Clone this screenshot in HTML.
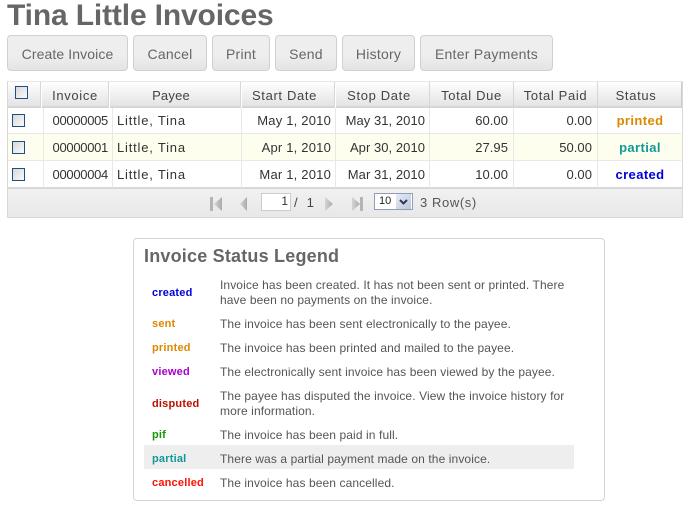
<!DOCTYPE html>
<html>
<head>
<meta charset="utf-8">
<style>
html,body{margin:0;padding:0;background:#fff;}
body{width:691px;height:507px;overflow:hidden;position:relative;font-family:"Liberation Sans",Arial,sans-serif;color:#333;}
.a{position:absolute;white-space:nowrap;}
h1{position:absolute;left:7px;top:-3px;margin:0;font-size:30px;line-height:38px;font-weight:bold;color:#666;white-space:nowrap;letter-spacing:-.15px;}
.btn{position:absolute;top:35px;height:34px;box-sizing:content-box;border:1px solid #d0d0d0;border-radius:4px;background:linear-gradient(#eee 0,#eee 55%,#e4e4e4 100%);color:#666;font-size:14px;line-height:36px;text-align:center;letter-spacing:.25px;}
.hd{position:absolute;top:82px;height:24px;box-sizing:content-box;background:linear-gradient(#fff,#f3f3f3 40%,#e4e4e4);border-bottom:2px solid #d6d6d6;border-right:1px solid #d6d6d6;color:#444;font-size:13px;line-height:28px;text-align:center;letter-spacing:.65px;}
.v{position:absolute;top:108px;width:1px;height:80px;background:#e8e8e8;}
.h{position:absolute;left:8px;width:673px;height:1px;background:#e8e8e8;}
.c{position:absolute;font-size:13px;line-height:16px;color:#333;white-space:nowrap;letter-spacing:.2px;}
.n{letter-spacing:-.3px;}
.m{letter-spacing:.05px;}
.t{letter-spacing:.8px;}
.r{text-align:right;}
.st{position:absolute;left:598px;width:84px;text-align:center;font-size:13px;font-weight:bold;line-height:16px;letter-spacing:.4px;}
.cb{position:absolute;width:11px;height:11px;border:1px solid #1c4f83;background:linear-gradient(135deg,#d8d8d8,#fafafa);}
.lb{position:absolute;left:152px;font-size:11px;font-weight:bold;line-height:14px;white-space:nowrap;letter-spacing:.2px;}
.ds{position:absolute;left:220px;font-size:12px;line-height:15px;color:#555;white-space:nowrap;letter-spacing:.1px;}
</style>
</head>
<body>
<h1>Tina Little Invoices</h1>

<div class="btn" style="left:7px;width:119px;letter-spacing:.1px;">Create Invoice</div>
<div class="btn" style="left:133px;width:72px;">Cancel</div>
<div class="btn" style="left:212px;width:56px;">Print</div>
<div class="btn" style="left:275px;width:60px;">Send</div>
<div class="btn" style="left:342px;width:71px;">History</div>
<div class="btn" style="left:420px;width:131px;">Enter Payments</div>

<!-- grid frame -->
<div class="a" style="left:7px;top:81px;width:674px;height:135px;border:1px solid #d8d8d8;border-top-color:#e8e8e8;"></div>

<!-- header -->
<div class="hd" style="left:8px;width:32px;"></div>
<div class="hd" style="left:42px;width:66px;">Invoice</div>
<div class="hd" style="left:110px;width:122px;padding-right:8px;letter-spacing:.2px;">Payee</div>
<div class="hd" style="left:242px;width:85px;padding-right:7px;">Start Date</div>
<div class="hd" style="left:336px;width:86px;padding-right:7px;">Stop Date</div>
<div class="hd" style="left:430px;width:83px;">Total Due</div>
<div class="hd" style="left:514px;width:83px;">Total Paid</div>
<div class="hd" style="left:598px;width:76px;padding-right:7px;border-right:1px solid #ccc;">Status</div>
<div class="cb" style="left:15px;top:86px;"></div>

<!-- rows -->
<div class="a" style="left:8px;top:134px;width:674px;height:26px;background:#fdfeee;"></div>
<div class="h" style="top:133px;"></div>
<div class="h" style="top:160px;"></div>
<div class="a" style="left:8px;top:187px;width:674px;height:2px;background:#d8d8d8;"></div>
<div class="v" style="left:43px;"></div>
<div class="v" style="left:112px;"></div>
<div class="v" style="left:241px;"></div>
<div class="v" style="left:335px;"></div>
<div class="v" style="left:429px;"></div>
<div class="v" style="left:513px;"></div>
<div class="v" style="left:597px;"></div>

<div class="cb" style="left:12px;top:114px;"></div>
<div class="cb" style="left:12px;top:141px;"></div>
<div class="cb" style="left:12px;top:168px;"></div>

<div class="c r n" style="left:44px;width:64px;top:113px;">00000005</div>
<div class="c t" style="left:117px;top:113px;">Little, Tina</div>
<div class="c r" style="left:242px;width:89px;top:113px;">May 1, 2010</div>
<div class="c r m" style="left:336px;width:89px;top:113px;">May 31, 2010</div>
<div class="c r m" style="left:430px;width:78px;top:113px;">60.00</div>
<div class="c r m" style="left:514px;width:78px;top:113px;">0.00</div>
<div class="st" style="top:113px;color:#dd8800;">printed</div>

<div class="c r n" style="left:44px;width:64px;top:140px;">00000001</div>
<div class="c t" style="left:117px;top:140px;">Little, Tina</div>
<div class="c r" style="left:242px;width:89px;top:140px;">Apr 1, 2010</div>
<div class="c r m" style="left:336px;width:89px;top:140px;">Apr 30, 2010</div>
<div class="c r m" style="left:430px;width:78px;top:140px;">27.95</div>
<div class="c r m" style="left:514px;width:78px;top:140px;">50.00</div>
<div class="st" style="top:140px;color:#119999;">partial</div>

<div class="c r n" style="left:44px;width:64px;top:167px;">00000004</div>
<div class="c t" style="left:117px;top:167px;">Little, Tina</div>
<div class="c r" style="left:242px;width:89px;top:167px;">Mar 1, 2010</div>
<div class="c r m" style="left:336px;width:89px;top:167px;">Mar 31, 2010</div>
<div class="c r m" style="left:430px;width:78px;top:167px;">10.00</div>
<div class="c r m" style="left:514px;width:78px;top:167px;">0.00</div>
<div class="st" style="top:167px;color:#0000dd;">created</div>

<!-- pager -->
<div class="a" style="left:8px;top:189px;width:674px;height:28px;background:linear-gradient(#f1f1f1,#e8e8e8);"></div>
<svg class="a" style="left:200px;top:190px;" width="180" height="28" viewBox="0 0 180 28">
<defs><linearGradient id="g" x1="0" y1="0" x2="1" y2="0"><stop offset="0" stop-color="#d4d4d4"/><stop offset="1" stop-color="#aaa"/></linearGradient></defs>
<path d="M10 7h3v14h-3z" fill="#b4b4b4"/><path d="M22 7v14l-8-7z" fill="url(#g)"/>
<path d="M47 7v14l-7-7z" fill="url(#g)"/>
<path d="M125 7v14l8-7z" fill="url(#g)"/>
<path d="M152 7v14l8-7z" fill="url(#g)"/><path d="M160 7h3v14h-3z" fill="#b4b4b4"/>
</svg>
<div class="a" style="left:261px;top:193px;width:28px;height:16px;background:#fff;border:1px solid #ccc;font-size:12px;line-height:15px;text-align:right;color:#333;"><span style="margin-right:2px;">1</span></div>
<div class="a" style="left:294px;top:195px;font-size:13px;line-height:16px;color:#444;letter-spacing:.6px;">/ &nbsp;1</div>
<div class="a" style="left:374px;top:193px;width:37px;height:15px;background:#fff;border:1px solid #8f9db5;"></div>
<div class="a" style="left:379px;top:194px;font-size:11px;line-height:14px;color:#222;">10</div>
<div class="a" style="left:396px;top:194px;width:15px;height:15px;background:linear-gradient(135deg,#e6ebf5,#bcc6dc);"></div>
<svg class="a" style="left:396px;top:194px;" width="15" height="15" viewBox="0 0 15 15"><path d="M4 6l3.500 3.500L11 6" fill="none" stroke="#2a3a5a" stroke-width="2"/></svg>
<div class="a" style="left:420px;top:195px;font-size:13px;line-height:16px;color:#555;letter-spacing:.6px;">3 Row(s)</div>

<!-- legend -->
<div class="a" style="left:133px;top:238px;width:470px;height:261px;border:1px solid #d4d4d4;border-radius:4px;"></div>
<div class="a" style="left:144px;top:245px;font-size:18px;line-height:22px;font-weight:bold;color:#666;letter-spacing:.2px;">Invoice Status Legend</div>
<div class="a" style="left:144px;top:445px;width:430px;height:24px;background:#eee;"></div>

<div class="lb" style="top:286px;color:#0000dd;">created</div>
<div class="ds" style="top:278px;">Invoice has been created. It has not been sent or printed. There</div>
<div class="ds" style="top:293px;">have been no payments on the invoice.</div>

<div class="lb" style="top:317px;color:#dd8800;">sent</div>
<div class="ds" style="top:317px;">The invoice has been sent electronically to the payee.</div>

<div class="lb" style="top:341px;color:#dd8800;">printed</div>
<div class="ds" style="top:341px;">The invoice has been printed and mailed to the payee.</div>

<div class="lb" style="top:365px;color:#aa00cc;">viewed</div>
<div class="ds" style="top:365px;">The electronically sent invoice has been viewed by the payee.</div>

<div class="lb" style="top:397px;color:#bb1100;">disputed</div>
<div class="ds" style="top:389px;">The payee has disputed the invoice. View the invoice history for</div>
<div class="ds" style="top:404px;">more information.</div>

<div class="lb" style="top:428px;color:#119900;">pif</div>
<div class="ds" style="top:428px;">The invoice has been paid in full.</div>

<div class="lb" style="top:452px;color:#119999;">partial</div>
<div class="ds" style="top:452px;">There was a partial payment made on the invoice.</div>

<div class="lb" style="top:476px;color:#ff1100;">cancelled</div>
<div class="ds" style="top:476px;">The invoice has been cancelled.</div>
</body>
</html>
